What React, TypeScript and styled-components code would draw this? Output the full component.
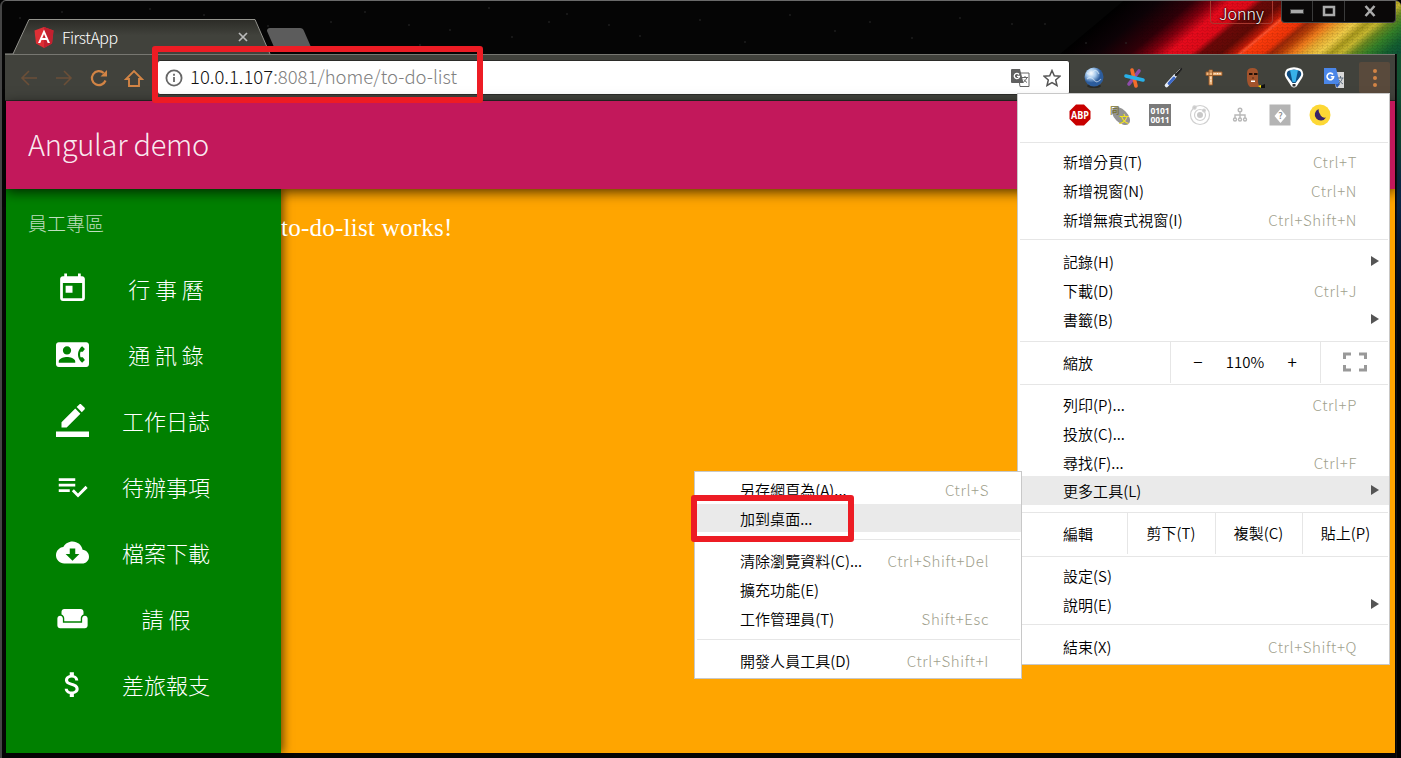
import React from "react";
import styled, { createGlobalStyle } from "styled-components";

const Global = createGlobalStyle`
  * { box-sizing: border-box; }
  body { margin: 0; background: #000; font-family: "Noto Sans CJK TC", "Noto Sans", sans-serif; font-weight: 300; }
`;

const Desktop = styled.div`
  position: relative;
  display: flex;
  flex-direction: column;
  width: 1401px;
  height: 758px;
  overflow: hidden;
  padding: 2px 6px 5px 3px;
  background: #050505;
  border-top: 1px solid #6a6a6a;
  border-left: 2px solid #454545;
  border-radius: 6px 6px 0 0;
`;

const TitleBar = styled.header`
  position: relative;
  display: flex;
  flex: none;
  height: 51px;
  align-items: flex-end;
  justify-content: space-between;
  margin: 0 -6px 0 0;
`;
const Backdrop = styled.svg`
  position: absolute;
  right: 0;
  top: -2px;
`;
const Edge = styled.div`
  position: absolute;
  right: 0;
  top: 53px;
  width: 5px;
  height: 704px;
  background: linear-gradient(#14532f 0, #0d4a38 90px, #0a2c4e 130px, #06142c 200px, #020810 260px, #000 320px);
  border-left: 1px solid #111;
`;
const Tab = styled.div`
  position: relative;
  display: flex;
  align-items: center;
  width: 265px;
  height: 35px;
  padding: 1px 22px 0 29px;
`;
const TabShape = styled.svg`
  position: absolute;
  left: 0;
  bottom: 0;
`;
const TabTitle = styled.span`
  position: relative;
  flex: 1;
  margin-left: 8px;
  color: #fff;
  font-size: 16px;
  line-height: 20px;
  letter-spacing: -0.5px;
`;
const TabGlyph = styled.svg`
  position: relative;
  flex: none;
`;
const Controls = styled.div`
  position: relative;
  display: flex;
  align-self: flex-start;
  margin: -2px 5px 0 0;
  gap: 8px;
`;
const User = styled.div`
  width: 63px;
  height: 23px;
  border: 1px solid #a8382f;
  border-top: 0;
  border-radius: 0 0 4px 4px;
  color: #fff;
  font-size: 16px;
  line-height: 24px;
  text-align: center;
  text-shadow: 0 0 2px #000, 0 0 2px #000;
`;
const WinButtons = styled.div`
  display: flex;
  height: 22px;
  padding-bottom: 1px;
  background: #0a0808;
  border: 1px solid #444;
  border-top: 0;
  border-radius: 0 0 4px 4px;
`;
const WinButton = styled.div<{ $w: number }>`
  display: grid;
  place-items: center;
  width: ${(p) => p.$w}px;
  & + & { border-left: 1px solid #3a3a3a; }
`;

const Toolbar = styled.nav`
  display: flex;
  flex: none;
  align-items: center;
  height: 47px;
  padding: 0 7px 0 14px;
  background: #41423c;
  border-top: 1px solid #777771;
  border-bottom: 1px solid #292a26;
`;
const NavIcon = styled.svg<{ $dim?: boolean }>`
  flex: none;
  width: 20px;
  height: 20px;
  margin-right: 15px;
  fill: none;
  stroke: ${(p) => (p.$dim ? "#6b4f38" : "#d28445")};
  stroke-width: ${(p) => (p.$dim ? 1.6 : 2.2)};
`;
const Omnibox = styled.div`
  display: flex;
  flex: none;
  align-items: center;
  width: 913px;
  height: 35px;
  margin-left: -2px;
  padding: 0 8px 0 7px;
  background: #fff;
  border: 1px solid #2b2b28;
  border-radius: 3px;
`;
const Url = styled.span`
  flex: 1;
  margin-left: 7px;
  padding-bottom: 3px;
  color: #808080;
  font-size: 18.5px;
  line-height: 24px;
  b { color: #111; font-weight: 300; }
`;
const Star = styled.svg`
  margin-left: 13px;
`;
const Extensions = styled.div`
  display: flex;
  flex: 1;
  align-items: center;
  gap: 16px;
  padding-left: 12px;
`;
const Ext = styled.svg`
  flex: none;
  width: 24px;
  height: 24px;
`;
const MoreButton = styled.div`
  display: flex;
  flex: none;
  flex-direction: column;
  align-items: center;
  justify-content: center;
  gap: 3px;
  width: 31px;
  height: 31px;
  margin-left: -3px;
  background: #594a3c;
  border-radius: 2px;
  i { width: 4px; height: 4px; border-radius: 50%; background: #d28445; }
`;

const Page = styled.main`
  display: flex;
  flex: 1;
  flex-direction: column;
  background: orange;
  margin-left: 1px;
`;
const AppBar = styled.div`
  position: relative;
  z-index: 2;
  flex: none;
  height: 88px;
  padding: 0 22px;
  background: #c2185b;
  color: rgba(255, 255, 255, 0.92);
  font-size: 29px;
  line-height: 85px;
  letter-spacing: -0.25px;
  box-shadow: 0 3px 12px rgba(0, 0, 0, 0.7);
`;
const Body = styled.div`
  display: flex;
  flex: 1;
`;
const SideNav = styled.aside`
  width: 275px;
  background: green;
  color: #fff;
  box-shadow: 2px 0 9px rgba(0, 0, 0, 0.6);
`;
const SideTitle = styled.div`
  height: 66px;
  padding-left: 22px;
  color: rgba(255, 255, 255, 0.75);
  font-size: 19px;
  line-height: 67px;
`;
const SideItem = styled.div`
  display: flex;
  align-items: center;
  height: 66px;
  padding-left: 50px;
`;
const SideIcon = styled.svg`
  flex: none;
  width: 33px;
  height: 33px;
  fill: #fff;
`;
const SideLabel = styled.span`
  width: 154px;
  font-size: 22px;
  line-height: 30px;
  text-align: center;
  white-space: pre;
`;
const Content = styled.p`
  margin: 22px 0 0;
  color: #fff;
  font: 400 25px/34px "Liberation Serif", serif;
  letter-spacing: 0.25px;
`;

const Menu = styled.div<{ $x: number; $y: number; $w: number; $h: number }>`
  position: absolute;
  z-index: 5;
  left: ${(p) => p.$x - 2}px;
  top: ${(p) => p.$y - 1}px;
  width: ${(p) => p.$w}px;
  height: ${(p) => p.$h}px;
  display: flex;
  flex-direction: column;
  background: #fff;
  border: 1px solid #c8c8c8;
  color: #000;
  font-size: 15px;
  font-weight: 350;
`;
const MenuIcons = styled.div`
  display: flex;
  flex: none;
  align-items: center;
  gap: 18px;
  height: 48px;
  padding: 0 0 7px 51px;
  svg { width: 22px; height: 22px; flex: none; }
`;
const Group = styled.div<{ $h: number; $top: number; $first?: boolean }>`
  position: relative;
  flex: none;
  height: ${(p) => p.$h}px;
  padding-top: ${(p) => p.$top}px;
  &::before {
    content: "";
    position: absolute;
    left: 2px;
    right: 1px;
    top: 0;
    height: ${(p) => (p.$first ? 0 : 1)}px;
    background: #e6e6e6;
  }
`;
const Row = styled.div<{ $on?: boolean }>`
  display: flex;
  align-items: center;
  height: 28.7px;
  padding: 1px 10px 0 45px;
  background: ${(p) => (p.$on ? "#eaeaea" : "transparent")};
  white-space: nowrap;
`;
const Name = styled.span`
  flex: 1;
  letter-spacing: 0.05px;
`;
const Key = styled.span`
  margin-right: 22px;
  color: #a0a08c;
  font-weight: 300;
  letter-spacing: 0.6px;
`;
const Arrow = styled.i`
  margin-top: -1px;
  border-left: 8px solid #555;
  border-top: 5px solid transparent;
  border-bottom: 5px solid transparent;
`;
const Cells = styled.div`
  display: flex;
  height: 42px;
  padding-top: 1px;
`;
const Cell = styled.div<{ $w: number; $lead?: boolean }>`
  display: flex;
  align-items: center;
  justify-content: ${(p) => (p.$lead ? "flex-start" : "center")};
  width: ${(p) => p.$w}px;
  padding-left: ${(p) => (p.$lead ? 45 : 0)}px;
  padding-right: ${(p) => (p.$lead ? 0 : 1)}px;
  padding-bottom: ${(p) => (p.$lead ? 0 : 2)}px;
  & + & { border-left: 1px solid #e6e6e6; }
`;
const ZoomStep = styled.span`
  flex: none;
  width: 56px;
  font-size: 17px;
  text-align: center;
`;
const Mark = styled.div<{ $x: number; $y: number; $w: number; $h: number }>`
  position: absolute;
  z-index: 9;
  left: ${(p) => p.$x - 2}px;
  top: ${(p) => p.$y - 1}px;
  width: ${(p) => p.$w}px;
  height: ${(p) => p.$h}px;
  border: 6px solid #ed1c24;
  border-radius: 3px;
`;

const SIDE = [
  { t: "行 事 曆", d: "M19 3h-1V1h-2v2H8V1H6v2H5c-1.11 0-1.99.9-1.99 2L3 19c0 1.1.89 2 2 2h14c1.1 0 2-.9 2-2V5c0-1.1-.9-2-2-2zm0 16H5V8h14v11zM7 10h5v5H7z" },
  { t: "通 訊 錄", d: "M22 3H2C.9 3 0 3.9 0 5v14c0 1.1.9 2 2 2h20c1.1 0 1.99-.9 1.99-2L24 5c0-1.1-.9-2-2-2zM8 6c1.66 0 3 1.34 3 3s-1.34 3-3 3-3-1.34-3-3 1.34-3 3-3zm6 12H2v-1c0-2 4-3.1 6-3.1s6 1.1 6 3.1v1zm3.85-4h1.64L21 16l-1.99 1.99c-1.31-.98-2.28-2.38-2.73-3.99-.18-.64-.28-1.31-.28-2s.1-1.36.28-2c.45-1.62 1.42-3.01 2.73-3.99L21 8l-1.51 2h-1.64c-.22.63-.35 1.3-.35 2s.13 1.37.35 2z" },
  { t: "工作日誌", d: "M17.75 7L14 3.25l-10 10V17h3.75l10-10zm2.96-2.96c.39-.39.39-1.02 0-1.41L18.37.29c-.39-.39-1.02-.39-1.41 0L15 2.25 18.75 6l1.96-1.96zM0 20h24v4H0z" },
  { t: "待辦事項", d: "M14 10H2v2h12v-2zm0-4H2v2h12V6zM2 16h8v-2H2v2zm19.5-4.5L23 13l-6.99 7-4.51-4.5L13 14l3.01 3 5.49-5.5z" },
  { t: "檔案下載", d: "M19.35 10.04C18.67 6.59 15.64 4 12 4 9.11 4 6.6 5.64 5.35 8.04 2.34 8.36 0 10.91 0 14c0 3.31 2.69 6 6 6h13c2.76 0 5-2.24 5-5 0-2.64-2.05-4.78-4.65-4.96zM17 13l-5 5-5-5h3V9h4v4h3z" },
  { t: "請 假", d: "M21 10c-1.1 0-2 .9-2 2v3H5v-3c0-1.1-.9-2-2-2s-2 .9-2 2v5c0 1.1.9 2 2 2h18c1.1 0 2-.9 2-2v-5c0-1.1-.9-2-2-2zm-3-5H6c-1.1 0-2 .9-2 2v2.15c1.16.41 2 1.51 2 2.82V14h12v-2.03c0-1.3.84-2.4 2-2.82V7c0-1.1-.9-2-2-2z" },
  { t: "差旅報支", d: "M11.8 10.9c-2.27-.59-3-1.2-3-2.15 0-1.09 1.01-1.85 2.7-1.85 1.78 0 2.44.85 2.5 2.1h2.21c-.07-1.72-1.12-3.3-3.21-3.81V3h-3v2.16c-1.94.42-3.5 1.68-3.5 3.61 0 2.31 1.91 3.46 4.7 4.13 2.5.6 3 1.48 3 2.41 0 .69-.49 1.79-2.7 1.79-2.06 0-2.87-.92-2.98-2.1h-2.2c.12 2.19 1.76 3.42 3.68 3.83V21h3v-2.15c1.95-.37 3.5-1.5 3.5-3.55 0-2.84-2.43-3.81-4.7-4.4z" },
];

type Item = { n: string; k?: string; sub?: boolean; on?: boolean };
const Items = ({ items }: { items: Item[] }) => (
  <>
    {items.map((i) => (
      <Row key={i.n} $on={i.on}>
        <Name>{i.n}</Name>
        {i.k && <Key>{i.k}</Key>}
        {i.sub && <Arrow />}
      </Row>
    ))}
  </>
);

/* Bottom-edge x position and colour of each light beam. */
const BEAMS: [number, string][] = [
  [1060, "#000"], [1095, "#0c0206"], [1130, "#300008"], [1150, "#80000e"], [1168, "#e80a1c"],
  [1190, "#e00a18"], [1200, "#6c0808"], [1220, "#600a06"], [1234, "#b81808"], [1242, "#ff3c0c"],
  [1262, "#f03408"], [1270, "#9c2808"], [1280, "#b84008"], [1292, "#f07c1c"], [1304, "#e8a830"],
  [1318, "#f0cc48"], [1330, "#a8981c"], [1340, "#c8b830"], [1352, "#688820"], [1366, "#348028"], [1384, "#146030"], [1401, "#0c5038"],
];
const STARS = [[20, 18], [38, 30], [62, 12], [85, 34], [110, 24], [126, 43], [150, 9], [172, 37], [204, 15], [222, 47], [268, 26], [300, 40], [331, 22], [365, 12], [409, 25], [420, 45], [450, 30], [489, 8], [512, 37], [549, 22], [567, 14], [609, 25], [640, 36], [700, 20], [745, 42], [790, 15], [835, 31], [870, 22], [912, 38], [960, 18], [1012, 24], [1045, 24], [1086, 43], [1126, 43]];

const Aurora = () => (
  <Backdrop width="1396" height="53" viewBox="5 1 1396 53">
    <defs>
      <linearGradient id="beams" gradientUnits="userSpaceOnUse" x1="1060" x2="1401">
        {BEAMS.map(([x, c]) => <stop key={x} offset={(x - 1060) / 341} stopColor={c} />)}
      </linearGradient>
      <linearGradient id="streak" x2="1"><stop stopColor="#ff4020" stopOpacity="0" /><stop offset=".5" stopColor="#ff5430" /><stop offset="1" stopColor="#ff4020" stopOpacity="0" /></linearGradient>
      <pattern id="hex" width="5" height="6" patternUnits="userSpaceOnUse"><path d="M0 1.5 2.5 0 5 1.5M2.5 3V6M0 4.5 2.5 3 5 4.5" stroke="#000" strokeOpacity=".13" fill="none" strokeWidth=".8" /></pattern>
    </defs>
    <g transform="translate(0 54) skewX(-50)">
      <rect x="1060" y="-54" width="345" height="54" fill="url(#beams)" />
      <rect x="1236" y="-38" width="8" height="38" fill="url(#streak)" />
    </g>
    <rect x="1140" width="261" height="54" fill="url(#hex)" />
    {STARS.map(([x, y]) => <circle key={x} cx={x} cy={y} r=".8" fill="#303030" />)}
  </Backdrop>
);

const PageArt = () => (
  <Extensions>
    <Ext viewBox="0 0 24 24">
      <defs><radialGradient id="globe" cx=".35" cy=".3"><stop offset="0" stopColor="#fff" /><stop offset=".5" stopColor="#a4c8ec" /><stop offset="1" stopColor="#2c5c9c" /></radialGradient></defs>
      <ellipse cx="12" cy="20" rx="7" ry="2" fill="#2a2b28" />
      <circle cx="12" cy="11" r="9.500" fill="url(#globe)" />
      <path d="M5 7q3 3 6-1t6 2M5 13q4-3 7 1t7-1" stroke="#e4f0fc" strokeWidth="1.200" fill="none" opacity=".6" />
    </Ext>
    <Ext viewBox="0 0 24 24" fill="none" strokeWidth="3.600" strokeLinecap="round">
      <path d="M7 18 17 5" stroke="#8e4bab" /><path d="m10 4 4 16" stroke="#f36c2b" /><path d="m4 10 17 4" stroke="#28b0e8" />
    </Ext>
    <Ext viewBox="0 0 24 24" fill="none" strokeLinecap="round">
      <path d="M4.500 19.500 13 10" stroke="#e8eef8" strokeWidth="3.600" /><path d="M7 17.500 12 12" stroke="#3c68c8" strokeWidth="2.800" /><path d="m14 9 5-6" stroke="#222" strokeWidth="2.400" /><path d="m14 7 4-4" stroke="#888" />
    </Ext>
    <Ext viewBox="0 0 24 24" fill="#eeb880" stroke="#9a5a28" strokeWidth=".9">
      <path d="M7 4h3.500v15H7zM4 6h16v3.500H4z" /><path d="M13 7v1.200m2.500-1.200v1.200m2.500-1.200v1.200M8 12h1.500M8 15h1.500" stroke="#fff" />
    </Ext>
    <Ext viewBox="0 0 24 24">
      <path d="M5 7q0-5 5.500-5T16 7v9q0 2 2 5H8q-3-3-3-8z" fill="#a3532c" /><path d="M7 7h3.500v2H7zm5 0h3.500v2H12z" fill="#241008" /><path d="M9 14.500h4v1.500H9z" fill="#fff" /><path d="M11 11v2" stroke="#5c2810" /><path d="m18 20 5-2v4h-5z" fill="#111" /><path d="m16 20 3-1v3z" fill="#ffe400" />
    </Ext>
    <Ext viewBox="0 0 24 24">
      <path d="M5 3q7-3.500 14 0 4 4 1 9l-5.500 8.500q-2.500 2-5 0L4 12Q1 7 5 3z" fill="#fff" /><path d="M6 5q6-3 12 0 2.500 3 0 6l-4.500 6h-3L6 11Q3.500 8 6 5z" fill="#104c80" /><path d="M8 4h8l-2.500 12h-3z" fill="#38b0e8" /><path d="M10.500 18h3v2.500h-3z" fill="#333" />
    </Ext>
    <Ext viewBox="0 0 24 24">
      <path d="M10 6h12v16H14z" fill="#d8d8d8" /><path d="M2 2h12l4 16H2z" fill="#4a86e8" /><path d="m13 18 5 0-3 4z" fill="#2c5cb8" />
      <path d="M11 8.500a3.300 3.300 0 1 0 .6 2.300H8.800" stroke="#fff" strokeWidth="1.600" fill="none" /><path d="M15.500 12h6M18.500 10v2m2 0q-1 4-4.500 6m1-4q2 3 4 4" stroke="#607080" fill="none" />
    </Ext>
    <MoreButton><i /><i /><i /></MoreButton>
  </Extensions>
);

const MenuArt = () => (
  <MenuIcons>
    <svg viewBox="0 0 22 22"><path d="M7 .5h8L21.500 7v8L15 21.500H7L.5 15V7z" fill="#c80000" /><text x="11" y="14.800" fontSize="10.500" fontWeight="700" fontFamily="Open Sans, sans-serif" textAnchor="middle" fill="#fff" textLength="18" lengthAdjust="spacingAndGlyphs">ABP</text></svg>
    <svg viewBox="0 0 22 22"><ellipse cx="12" cy="12" rx="11" ry="6.500" transform="rotate(45 12 12)" fill="#949494" /><text x="1" y="10" fontSize="9.500" fontWeight="500" fill="#76702c">同</text><text x="10" y="19" fontSize="10" fontWeight="500" fill="#f0e020">文</text></svg>
    <svg viewBox="0 0 22 22"><path fill="#7a7a7a" d="M0 0h22v22H0z" /><g fill="#fff" fontSize="8.500" fontWeight="700" fontFamily="Open Sans, sans-serif"><text x="1.500" y="9.500" textLength="19">0101</text><text x="1.500" y="19" textLength="19">0011</text></g></svg>
    <svg viewBox="0 0 22 22" fill="none" stroke="#d0d0d0" strokeWidth="1.200"><circle cx="11" cy="11" r="9.500" /><circle cx="11" cy="11" r="5.500" /><circle cx="11" cy="11" r="3" fill="#c8c8c8" stroke="none" /><circle cx="5.500" cy="3.500" r="1.600" fill="#c8c8c8" /><circle cx="15" cy="6.500" r="1.300" fill="#c8c8c8" /></svg>
    <svg viewBox="0 0 22 22" fill="none" stroke="#b8b8b8" strokeWidth="1.400"><circle cx="11" cy="6" r="1.800" /><path d="M11 8v6M6 14v-3h10v3" /><circle cx="6" cy="15.500" r="1.500" /><circle cx="11" cy="15.500" r="1.500" /><circle cx="16" cy="15.500" r="1.500" /></svg>
    <svg viewBox="0 0 22 22"><path fill="#b4b4b4" d="M.5.500h21v21H.5z" /><path d="m11.500 5 6 7-6 7-6-7z" fill="#fff" /><text x="11.500" y="15" fontSize="9" fontWeight="500" textAnchor="middle" fill="#888">?</text></svg>
    <svg viewBox="0 0 22 22"><circle cx="11" cy="11" r="10.500" fill="#fdd835" /><path d="M9.500 5a6 6 0 1 0 7.500 8.500A5 5 0 0 1 11 10Q9.500 8 9.500 5z" fill="#3a2468" /></svg>
  </MenuIcons>
);

export default function App() {
  return (
    <Desktop>
      <Global />
      <TitleBar>
        <Aurora />
        <Tab>
          <TabShape width="310" height="35" viewBox="5 19 310 35">
            <defs><linearGradient id="tab" x2="0" y2="1"><stop stopColor="#2c2c27" /><stop offset=".45" stopColor="#41423c" /></linearGradient></defs>
            <path d="M267 31q0-3 3-3h30q3 0 4 3l7 16h-37z" fill="#5c5c5c" />
            <path d="M5 54h8l16-34h226l15 34z" fill="url(#tab)" />
            <path d="M5 54h8l16-34.500h226l15 34.500" fill="none" stroke="#94948e" />
          </TabShape>
          <TabGlyph width="20" height="21" viewBox="0 0 20 21"><path d="M10 0 19.500 3.400 18 16.500 10 21 2 16.500.5 3.400z" fill="#dd2f35" /><path d="M10 0 19.500 3.400 18 16.500 10 21z" fill="#c3202f" /><path d="M10 2.500 4 16h2.300l1.200-3h5l1.200 3H16zm0 4.400 1.700 4.200H8.300z" fill="#fff" fillRule="evenodd" /></TabGlyph>
          <TabTitle>FirstApp</TabTitle>
          <TabGlyph width="10" height="10" viewBox="0 0 10 10"><path d="m1 1 8 8m0-8L1 9" stroke="#bbb" strokeWidth="1.700" /></TabGlyph>
        </Tab>
        <Controls>
          <User>Jonny</User>
          <WinButtons>
            <WinButton $w={30}><svg width="14" height="5"><path d="M.5.500h13v4H.5z" fill="#aaa" stroke="#444" /></svg></WinButton>
            <WinButton $w={32}><svg width="14" height="12"><path d="M2 2h10v8H2z" fill="none" stroke="#aaa" strokeWidth="2.500" /></svg></WinButton>
            <WinButton $w={51}><svg width="12" height="12"><path d="m1.500 1 9 10m0-10-9 10" stroke="#aaa" strokeWidth="2.600" /></svg></WinButton>
          </WinButtons>
        </Controls>
      </TitleBar>
      <Toolbar>
        <NavIcon $dim viewBox="0 0 20 20"><path d="M18 10H3m7-7-7 7 7 7" /></NavIcon>
        <NavIcon $dim viewBox="0 0 20 20"><path d="M2 10h15m-7-7 7 7-7 7" /></NavIcon>
        <NavIcon viewBox="0 0 20 20"><path d="M16.500 12.500a7 7 0 1 1-1.800-7.500" /><path d="M18 2v6.500h-6.500z" fill="#d28445" stroke="none" /></NavIcon>
        <NavIcon viewBox="0 0 20 20"><path d="M2 11h3v7h10v-7h3l-8-8z" strokeWidth="1.900" /></NavIcon>
        <Omnibox>
          <svg width="18" height="18" viewBox="0 0 18 18" fill="none" stroke="#666" strokeWidth="1.800"><circle cx="9" cy="9" r="7.600" /><path d="M9 8v5M9 4.800v1.900" /></svg>
          <Url><b>10.0.1.107</b>:8081/home/to-do-list</Url>
          <svg width="19" height="18" viewBox="0 0 19 18"><path d="M7 4h11v13.500H9z" fill="#fff" stroke="#666" /><path d="M1 0h8l3.500 14H1q-1 0-1-1V1q0-1 1-1z" fill="#606060" /><path d="M8 5.500a2.600 2.600 0 1 0 .5 1.800H6" stroke="#fff" strokeWidth="1.300" fill="none" /><path d="M11 8.500h6M14 7v1.500m2 0q-1 3-4 5m1-3q1 2 3 3" stroke="#666" fill="none" /></svg>
          <Star width="18" height="18" viewBox="0 0 18 18"><path d="m9 1.500 2.300 5.200 5.700.5-4.300 3.700 1.300 5.600-5-3-5 3 1.300-5.600L1 7.200l5.700-.5z" fill="none" stroke="#555" strokeWidth="1.500" /></Star>
        </Omnibox>
        <PageArt />
      </Toolbar>
      <Page>
        <AppBar>Angular demo</AppBar>
        <Body>
          <SideNav>
            <SideTitle>員工專區</SideTitle>
            {SIDE.map((s) => (
              <SideItem key={s.t}>
                <SideIcon viewBox="0 0 24 24"><path d={s.d} /></SideIcon>
                <SideLabel>{s.t}</SideLabel>
              </SideItem>
            ))}
          </SideNav>
          <Content>to-do-list works!</Content>
        </Body>
      </Page>
      <Edge />

      <Menu $x={1017} $y={93} $w={373} $h={572}>
        <MenuArt />
        <Group $h={97} $top={5}>
          <Items items={[{ n: "新增分頁(T)", k: "Ctrl+T" }, { n: "新增視窗(N)", k: "Ctrl+N" }, { n: "新增無痕式視窗(I)", k: "Ctrl+Shift+N" }]} />
        </Group>
        <Group $h={102} $top={8}>
          <Items items={[{ n: "記錄(H)", sub: true }, { n: "下載(D)", k: "Ctrl+J" }, { n: "書籤(B)", sub: true }]} />
        </Group>
        <Group $h={43} $top={0}>
          <Cells>
            <Cell $w={152} $lead>縮放</Cell>
            <Cell $w={150}>
              <ZoomStep>−</ZoomStep>
              <span>110%</span>
              <ZoomStep>+</ZoomStep>
            </Cell>
            <Cell $w={69}><svg width="24" height="20" fill="none" stroke="#999" strokeWidth="3"><path d="M1.500 7V2H8m8 0h6.500v5m0 6v5H16m-8 0H1.500v-5" /></svg></Cell>
          </Cells>
        </Group>
        <Group $h={128} $top={6}>
          <Items items={[{ n: "列印(P)...", k: "Ctrl+P" }, { n: "投放(C)..." }, { n: "尋找(F)...", k: "Ctrl+F" }, { n: "更多工具(L)", sub: true, on: true }]} />
        </Group>
        <Group $h={44} $top={0}>
          <Cells>
            <Cell $w={109} $lead>編輯</Cell>
            <Cell $w={88}>剪下(T)</Cell>
            <Cell $w={87}>複製(C)</Cell>
            <Cell $w={87}>貼上(P)</Cell>
          </Cells>
        </Group>
        <Group $h={68} $top={5}>
          <Items items={[{ n: "設定(S)" }, { n: "說明(E)", sub: true }]} />
        </Group>
        <Group $h={39} $top={8}>
          <Items items={[{ n: "結束(X)", k: "Ctrl+Shift+Q" }]} />
        </Group>
      </Menu>

      <Menu $x={694} $y={471} $w={328} $h={208}>
        <Group $h={67} $top={3} $first>
          <Items items={[{ n: "另存網頁為(A)...", k: "Ctrl+S" }, { n: "加到桌面...", on: true }]} />
        </Group>
        <Group $h={100} $top={7}>
          <Items items={[{ n: "清除瀏覽資料(C)...", k: "Ctrl+Shift+Del" }, { n: "擴充功能(E)" }, { n: "工作管理員(T)", k: "Shift+Esc" }]} />
        </Group>
        <Group $h={39} $top={7}>
          <Items items={[{ n: "開發人員工具(D)", k: "Ctrl+Shift+I" }]} />
        </Group>
      </Menu>

      <Mark $x={152} $y={46} $w={331} $h={57} />
      <Mark $x={691} $y={495} $w={163} $h={47} />
    </Desktop>
  );
}
